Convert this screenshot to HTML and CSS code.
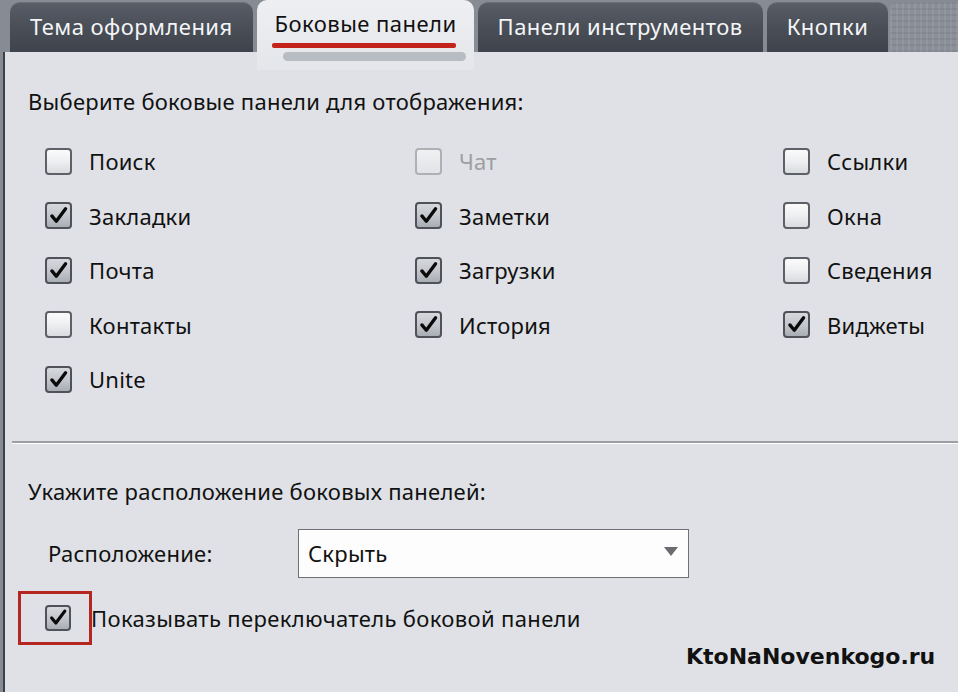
FILE: index.html
```html
<!DOCTYPE html>
<html lang="ru">
<head>
<meta charset="utf-8">
<link rel="stylesheet" href="styles.css">
</head>
<body>
<div class="window">
  <div class="tabs">
    <div class="tab">Тема оформления</div>
    <div class="tab active"><span class="tab-text">Боковые панели</span><span class="red-bar"></span><span class="grey-pill"></span></div>
    <div class="tab">Панели инструментов</div>
    <div class="tab">Кнопки</div>
    <div class="tab-fill"></div>
  </div>
  <div class="panel">
    <div class="heading">Выберите боковые панели для отображения:</div>
    <div class="grid">
      <label class="item"><span class="cb"></span>Поиск</label>
      <label class="item disabled"><span class="cb"></span>Чат</label>
      <label class="item"><span class="cb"></span>Ссылки</label>

      <label class="item"><span class="cb checked"><svg viewBox="0 0 26 26"><path d="M5.5 13.5 L10.5 19.5 L21 5.5"/></svg></span>Закладки</label>
      <label class="item"><span class="cb checked"><svg viewBox="0 0 26 26"><path d="M5.5 13.5 L10.5 19.5 L21 5.5"/></svg></span>Заметки</label>
      <label class="item"><span class="cb"></span>Окна</label>

      <label class="item"><span class="cb checked"><svg viewBox="0 0 26 26"><path d="M5.5 13.5 L10.5 19.5 L21 5.5"/></svg></span>Почта</label>
      <label class="item"><span class="cb checked"><svg viewBox="0 0 26 26"><path d="M5.5 13.5 L10.5 19.5 L21 5.5"/></svg></span>Загрузки</label>
      <label class="item"><span class="cb"></span>Сведения</label>

      <label class="item"><span class="cb"></span>Контакты</label>
      <label class="item"><span class="cb checked"><svg viewBox="0 0 26 26"><path d="M5.5 13.5 L10.5 19.5 L21 5.5"/></svg></span>История</label>
      <label class="item"><span class="cb checked"><svg viewBox="0 0 26 26"><path d="M5.5 13.5 L10.5 19.5 L21 5.5"/></svg></span>Виджеты</label>

      <label class="item"><span class="cb checked"><svg viewBox="0 0 26 26"><path d="M5.5 13.5 L10.5 19.5 L21 5.5"/></svg></span>Unite</label>
    </div>
    <div class="divider"></div>
    <div class="heading heading2">Укажите расположение боковых панелей:</div>
    <div class="select-row">
      <span class="select-label">Расположение:</span>
      <div class="select"><span>Скрыть</span><span class="arrow"></span></div>
    </div>
    <div class="toggle-row">
      <span class="highlight"><span class="cb checked"><svg viewBox="0 0 26 26"><path d="M5.5 13.5 L10.5 19.5 L21 5.5"/></svg></span></span>
      <span class="toggle-label">Показывать переключатель боковой панели</span>
    </div>
    <div class="watermark">KtoNaNovenkogo.ru</div>
  </div>
</div>
</body>
</html>
```

FILE: styles.css
```css
* { box-sizing: border-box; }
html, body { margin: 0; padding: 0; }
body {
  width: 958px;
  height: 692px;
  overflow: hidden;
  background: #dfe1e6;
  font-family: "Noto Sans", "Open Sans", sans-serif;
  color: #111;
}
.window {
  width: 958px;
  height: 692px;
  display: flex;
  flex-direction: column;
  background: #878b94;
}
.tabs {
  height: 52px;
  flex: none;
  display: flex;
  align-items: flex-end;
  gap: 4px;
  padding-left: 10px;
  position: relative;
  z-index: 2;
}
.tab {
  height: 50px;
  padding: 0 20px 4px 20px;
  display: flex;
  align-items: center;
  font-size: 22px;
  letter-spacing: 0.45px;
  color: #f4f5f7;
  background: linear-gradient(#585d67 0%, #4a4f58 45%, #3f444c 100%);
  border-radius: 10px 10px 0 0;
  border-top: 1px solid #6a6f78;
  white-space: nowrap;
}
.tab.active {
  width: 217px;
  height: 70px;
  margin-bottom: -18px;
  flex-direction: column;
  align-items: flex-start;
  justify-content: flex-start;
  padding: 6px 0 0 18px;
  background: linear-gradient(#eeeff2, #e4e6ea);
  border-top: none;
  color: #111;
}
.tab-text { line-height: 34px; }
.red-bar {
  display: block;
  width: 184px;
  height: 5px;
  margin-top: 3px;
  margin-left: -3px;
  background: #c4231b;
  border-radius: 2px;
}
.grey-pill {
  display: block;
  width: 183px;
  height: 9px;
  margin-top: 4px;
  margin-left: 8px;
  background: #b8bcc3;
  border-radius: 5px;
}
.tab-fill {
  flex: 1;
  height: 50px;
  margin-left: -2px;
  background:
    repeating-linear-gradient(90deg, rgba(255,255,255,0.07) 0 2px, transparent 2px 6px),
    repeating-linear-gradient(0deg, rgba(0,0,0,0.06) 0 2px, transparent 2px 6px),
    #8b8f98;
  border-radius: 8px 0 0 0;
}
.panel {
  flex: 1;
  position: relative;
  margin-left: 3px;
  border-left: 2px solid #3c4048;
  background: #dfe1e6;
  padding: 34px 0 0 23px;
  font-size: 22px;
  letter-spacing: 0.25px;
}
.heading {
  line-height: 30px;
  height: 30px;
}
.grid {
  margin-top: 18px;
  padding-left: 17px;
  display: grid;
  grid-template-columns: 370px 368px auto;
  grid-auto-rows: 54.5px;
}
.item {
  display: flex;
  align-items: center;
  gap: 17px;
  white-space: nowrap;
}
.item.disabled { color: #9c9ea3; }
.item.disabled .cb {
  border-color: #aeb0b5;
  background: linear-gradient(#f0f1f3, #e2e3e6);
}
.cb {
  flex: none;
  width: 27px;
  height: 27px;
  border: 2px solid #5d6067;
  border-radius: 4px;
  background: linear-gradient(#fbfbfc 0%, #eeeff1 50%, #d9dbdf 100%);
  display: inline-flex;
  align-items: center;
  justify-content: center;
}
.cb.checked {
  background: linear-gradient(#d6d8dc 0%, #c2c5cb 55%, #a9adb4 100%);
  border-color: #4f5258;
}
.cb svg { width: 25px; height: 25px; }
.cb path {
  fill: none;
  stroke: #0a0a0a;
  stroke-width: 3.8;
  stroke-linecap: round;
  stroke-linejoin: round;
}
.divider {
  margin: 34px 0 0 -16px;
  height: 3px;
  border-top: 2px solid #9b9ea4;
  border-bottom: 1px solid #ffffff;
}
.heading2 { margin-top: 32px; }
.select-row {
  margin-top: 23px;
  display: flex;
  align-items: center;
  padding-left: 20px;
}
.select-label { width: 250px; }
.select {
  width: 391px;
  height: 49px;
  background: #fdfdfd;
  border: 1px solid #6e7076;
  display: flex;
  align-items: center;
  justify-content: space-between;
  padding: 0 10px 0 9px;
}
.arrow {
  width: 0;
  height: 0;
  border-left: 7px solid transparent;
  border-right: 7px solid transparent;
  border-top: 9px solid #6a6c70;
  margin-top: -4px;
}
.toggle-row {
  margin-top: 13px;
  margin-left: -10px;
  display: flex;
  align-items: center;
}
.highlight {
  width: 74px;
  height: 54px;
  border: 3px solid #b62620;
  display: flex;
  align-items: center;
  padding-left: 24px;
}
.highlight .cb { width: 26px; height: 26px; }
.toggle-label { margin-left: -1px; letter-spacing: 0.35px; }
.watermark {
  position: absolute;
  left: 681px;
  top: 592px;
  font-family: "DejaVu Sans", sans-serif;
  font-weight: bold;
  font-size: 22px;
  color: #111;
  letter-spacing: 0;
}
```
